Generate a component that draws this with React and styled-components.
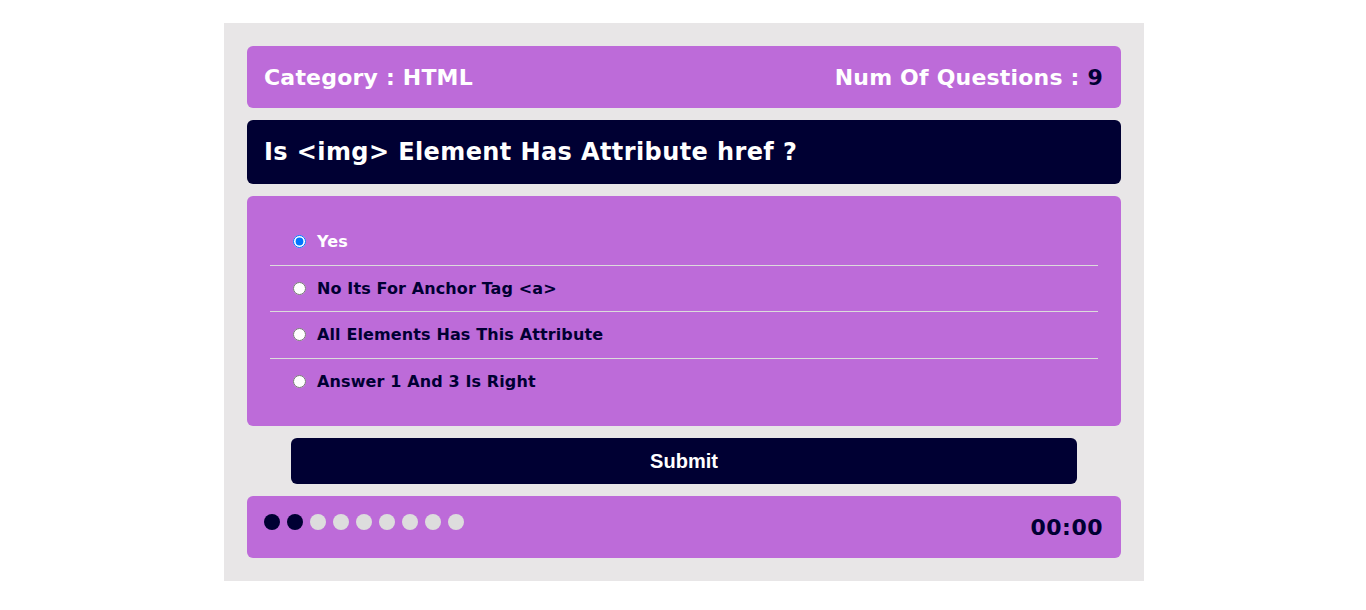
import styled, { createGlobalStyle } from "styled-components";

const GlobalStyle = createGlobalStyle`
  body {
    margin: 0;
    background: #fff;
    font-family: "DejaVu Sans", Verdana, sans-serif;
  }
`;

// --- Styled Components ---
const QuizApp = styled.div`
  width: 920px;
  margin: 23px auto 0;
  padding: 23px;
  box-sizing: border-box;
  background-color: #e8e6e7;
  display: flex;
  flex-direction: column;
  gap: 12px;
  transform: translateX(1px);
`;

const QuizInfo = styled.div`
  display: flex;
  justify-content: space-between;
  align-items: center;
  height: 62px;
  padding: 0 18px 0 17px;
  box-sizing: border-box;
  background-color: #bd6bd9;
  border-radius: 6px;
  color: #fff;
  font-size: 22px;
  font-weight: bold;
  letter-spacing: 0.2px;
`;

const Count = styled.span`
  color: #000033;
`;

const QuestionBox = styled.div`
  height: 64px;
  padding: 0 17px;
  box-sizing: border-box;
  display: flex;
  align-items: center;
  background-color: #000033;
  border-radius: 6px;
  color: #fff;
  font-size: 24px;
  font-weight: bold;
  letter-spacing: 0.4px;
`;

const AnswersArea = styled.div`
  background-color: #bd6bd9;
  border-radius: 6px;
  padding: 23px 23px 21px;
  display: flex;
  flex-direction: column;
`;

const Answer = styled.label`
  display: flex;
  align-items: center;
  height: 46.5px;
  padding-left: 23px;
  box-sizing: border-box;
  border-bottom: ${(p) => (p.$last ? "none" : "1px solid #dcdcdc")};
  font-size: 16px;
  font-weight: bold;
  letter-spacing: 0.12px;
  color: ${(p) => (p.$checked ? "#fff" : "#000033")};
  cursor: pointer;

  input {
    margin: 0 11px 0 0;
    width: 13px;
    height: 13px;
  }
`;

const SubmitButton = styled.button`
  width: 90%;
  height: 46px;
  align-self: center;
  border: none;
  border-radius: 6px;
  background-color: #000033;
  color: #fff;
  font-family: "Liberation Sans", Arial, sans-serif;
  font-size: 20px;
  font-weight: bold;
  cursor: pointer;
`;

const Footer = styled.div`
  display: flex;
  justify-content: space-between;
  align-items: flex-start;
  height: 62px;
  padding: 18px 18px 0 17px;
  box-sizing: border-box;
  background-color: #bd6bd9;
  border-radius: 6px;
`;

const Bullets = styled.div`
  display: flex;
  gap: 7px;
`;

const Bullet = styled.span`
  width: 16px;
  height: 16px;
  border-radius: 50%;
  background-color: ${(p) => (p.$on ? "#000033" : "#dddddd")};
`;

const Countdown = styled.div`
  margin-top: 1px;
  font-size: 22px;
  font-weight: bold;
  color: #000033;
  letter-spacing: 0.5px;
`;

const answers = [
  "Yes",
  "No Its For Anchor Tag <a>",
  "All Elements Has This Attribute",
  "Answer 1 And 3 Is Right",
];

const App = () => {
  return (
    <>
      <GlobalStyle />
      <QuizApp>
        <QuizInfo>
          <span>Category : HTML</span>
          <span>
            Num Of Questions : <Count>9</Count>
          </span>
        </QuizInfo>

        <QuestionBox>Is &lt;img&gt; Element Has Attribute href ?</QuestionBox>

        <AnswersArea>
          {answers.map((text, i) => (
            <Answer
              key={i}
              $checked={i === 0}
              $last={i === answers.length - 1}
            >
              <input
                type="radio"
                name="question"
                defaultChecked={i === 0}
              />
              {text}
            </Answer>
          ))}
        </AnswersArea>

        <SubmitButton>Submit</SubmitButton>

        <Footer>
          <Bullets>
            {Array.from({ length: 9 }).map((_, i) => (
              <Bullet key={i} $on={i < 2} />
            ))}
          </Bullets>
          <Countdown>00:00</Countdown>
        </Footer>
      </QuizApp>
    </>
  );
};

export default App;
